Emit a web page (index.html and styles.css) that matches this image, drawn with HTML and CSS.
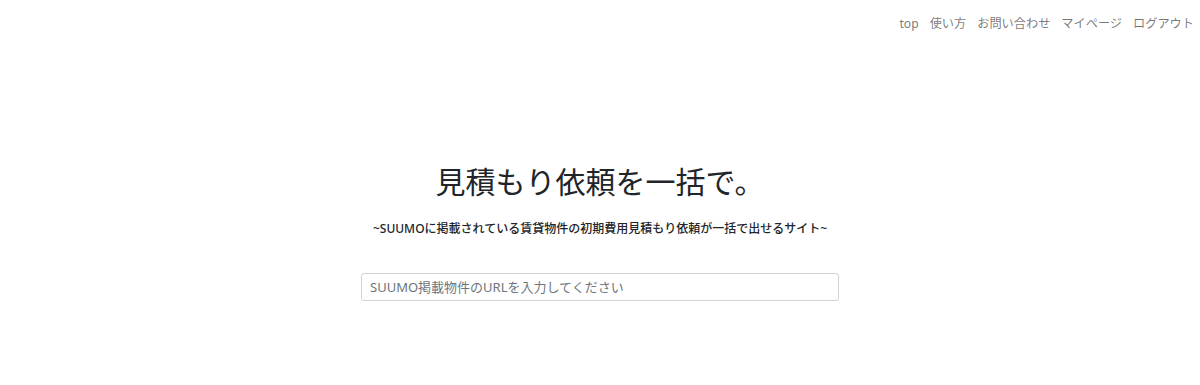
FILE: index.html
```html
<!DOCTYPE html>
<html lang="ja">
<head>
<meta charset="utf-8">
<title>見積もり依頼を一括で。</title>
<link rel="stylesheet" href="styles.css">
</head>
<body>
<header class="navbar">
  <nav class="nav">
    <a class="nav-link" href="#">top</a>
    <a class="nav-link" href="#">使い方</a>
    <a class="nav-link" href="#">お問い合わせ</a>
    <a class="nav-link" href="#">マイページ</a>
    <a class="nav-link" href="#">ログアウト</a>
  </nav>
</header>
<main class="hero">
  <h1 class="title">見積もり依頼を一括で。</h1>
  <p class="subtitle">~SUUMOに掲載されている賃貸物件の初期費用見積もり依頼が一括で出せるサイト~</p>
  <form class="search">
    <input class="form-control" type="text" placeholder="SUUMO掲載物件のURLを入力してください">
  </form>
</main>
</body>
</html>
```
FILE: styles.css
```css
* { box-sizing: border-box; }
html, body { margin: 0; padding: 0; }
body {
  width: 1200px;
  height: 385px;
  background: #fff;
  color: #212529;
  font-family: "Noto Sans", "Noto Sans CJK JP", sans-serif;
}
.navbar {
  display: flex;
  justify-content: flex-end;
  padding: 14px 6px 0 0;
}
.nav {
  display: flex;
  gap: 11px;
}
.nav-link {
  font-size: 12.2px;
  line-height: 20px;
  color: rgba(0, 0, 0, 0.55);
  text-decoration: none;
}
.hero {
  display: flex;
  flex-direction: column;
  align-items: center;
  padding-top: 126px;
}
.title {
  margin: 0;
  font-size: 30px;
  font-weight: 400;
  line-height: 44px;
  color: #212529;
}
.subtitle {
  margin: 16px 0 0;
  font-size: 12px;
  font-weight: 500;
  line-height: 18px;
  color: #212529;
}
.search {
  margin-top: 35px;
  width: 478px;
}
.form-control {
  display: block;
  width: 100%;
  height: 28px;
  padding: 0 8px;
  font-family: inherit;
  font-size: 13px;
  color: #495057;
  background: #fff;
  border: 1px solid #ced4da;
  border-radius: 3px;
}
.form-control::placeholder { color: #6c757d; opacity: 1; }
```
